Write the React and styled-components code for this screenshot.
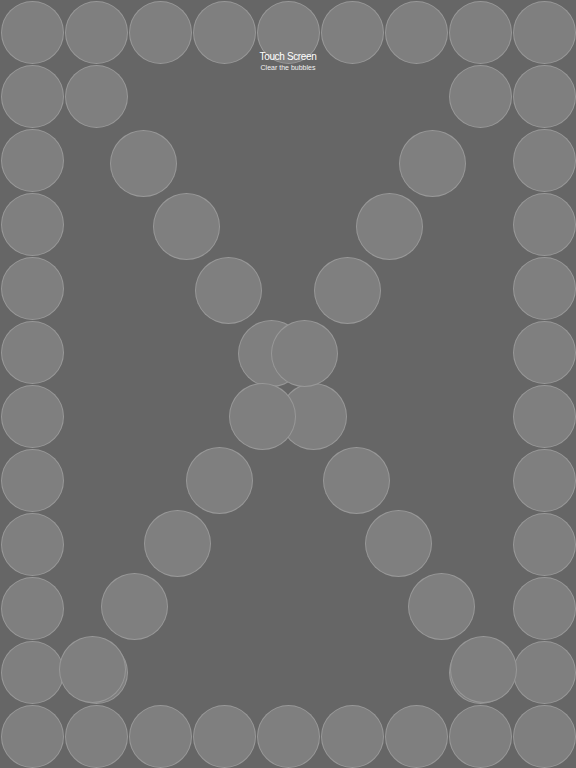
import React from "react";
import styled, { createGlobalStyle } from "styled-components";

const GlobalStyle = createGlobalStyle`
  html, body {
    margin: 0;
    padding: 0;
    background: #666666;
  }
  body {
    font-family: "Liberation Sans", Arial, sans-serif;
    overflow: hidden;
  }
`;

const COLS = 9;
const ROWS = 12;

// ring of bubbles round the edge, plus a few extra ones in the corners
const ring = [];
for (let r = 0; r < ROWS; r++) {
  for (let c = 0; c < COLS; c++) {
    if (r === 0 || r === ROWS - 1 || c === 0 || c === COLS - 1) {
      ring.push({ r, c });
    }
  }
}
const extras = [
  { r: 1, c: 1 },
  { r: 1, c: 7 },
  { r: 10, c: 1 },
  { r: 10, c: 7 },
];

// the two arms of the X
const STEP_X = 42.55;
const STEP_Y = 63.3;
const leftArm = Array.from({ length: 9 }, (_, i) => ({
  x: 143.5 + i * STEP_X,
  y: 163.5 + i * STEP_Y,
}));
const rightArm = Array.from({ length: 9 }, (_, i) => ({
  x: 432.5 - i * STEP_X,
  y: 163.5 + i * STEP_Y,
}));

const App = () => {
  return (
    <>
      <GlobalStyle />
      <Screen>
        <Board>
          {[...ring, ...extras].map((b, i) => (
            <Bubble key={i} $row={b.r} $col={b.c} />
          ))}
        </Board>

        {[...leftArm, ...rightArm].map((p, i) => (
          <FloatBubble key={i} style={{ left: p.x - 33.5, top: p.y - 33.5 }} />
        ))}

        <Header>
          <Title>Touch Screen</Title>
          <Subtitle>Clear the bubbles</Subtitle>
        </Header>
      </Screen>
    </>
  );
};

const Screen = styled.div`
  position: relative;
  width: 576px;
  height: 768px;
  background: #666666;
  overflow: hidden;
`;

const Board = styled.div`
  display: grid;
  grid-template-columns: repeat(${COLS}, 64px);
  grid-template-rows: repeat(${ROWS}, 64px);
`;

const Bubble = styled.div`
  grid-row: ${(p) => p.$row + 1};
  grid-column: ${(p) => p.$col + 1};
  margin: 0.5px;
  border-radius: 50%;
  box-sizing: border-box;
  background: #7f7f7f;
  border: 1px solid rgba(255, 255, 255, 0.2);
`;

const FloatBubble = styled.div`
  position: absolute;
  width: 67px;
  height: 67px;
  border-radius: 50%;
  box-sizing: border-box;
  background: #7f7f7f;
  border: 1px solid rgba(255, 255, 255, 0.2);
`;

const Header = styled.div`
  position: absolute;
  top: 50px;
  left: 0;
  right: 0;
  display: flex;
  flex-direction: column;
  align-items: center;
  color: #ffffff;
  pointer-events: none;
`;

const Title = styled.div`
  font-size: 10px;
  line-height: 13px;
  letter-spacing: -0.35px;
`;

const Subtitle = styled.div`
  font-size: 7px;
  line-height: 9px;
  margin-top: 0px;
  color: #f2f2f2;
`;

export default App;
